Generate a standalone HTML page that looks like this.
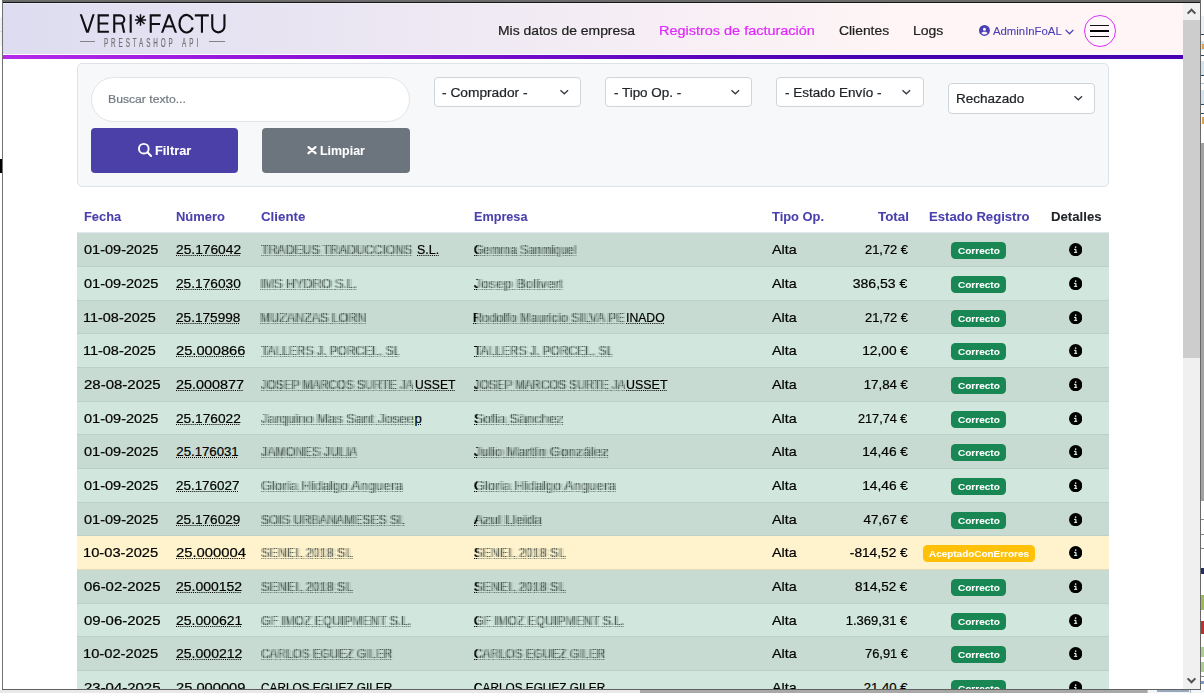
<!DOCTYPE html>
<html lang="es">
<head>
<meta charset="utf-8">
<title>VERI*FACTU - Registros de facturación</title>
<style>
*{box-sizing:border-box;margin:0;padding:0}
html,body{width:1204px;height:693px;overflow:hidden;background:#fff}
body{font-family:"Liberation Sans",sans-serif;color:#212529;position:relative;font-size:14px}
.a{position:absolute;display:block}
.t{position:absolute;white-space:pre;display:block;-webkit-text-stroke:.22px currentColor}
.u{text-decoration:underline dotted;text-decoration-thickness:1px;text-underline-offset:1px}
.bl{filter:blur(.45px);opacity:.78;color:#2c3a36 !important;text-shadow:1.5px 0 0 rgba(40,52,48,.45),-1.5px 0 0 rgba(40,52,48,.35),3px 0 0 rgba(40,52,48,.2);text-decoration:underline dashed;text-decoration-thickness:1px;text-underline-offset:1px;text-decoration-color:rgba(40,52,48,.5);-webkit-mask-image:repeating-linear-gradient(90deg,#000 0,#000 1px,rgba(0,0,0,.4) 1px,rgba(0,0,0,.4) 2px,rgba(0,0,0,.9) 2px,rgba(0,0,0,.9) 3px,rgba(0,0,0,.5) 3px,rgba(0,0,0,.5) 4.5px,#000 4.5px,#000 5px,rgba(0,0,0,.45) 5px,rgba(0,0,0,.45) 7px);mask-image:repeating-linear-gradient(90deg,#000 0,#000 1px,rgba(0,0,0,.4) 1px,rgba(0,0,0,.4) 2px,rgba(0,0,0,.9) 2px,rgba(0,0,0,.9) 3px,rgba(0,0,0,.5) 3px,rgba(0,0,0,.5) 4.5px,#000 4.5px,#000 5px,rgba(0,0,0,.45) 5px,rgba(0,0,0,.45) 7px)}
</style>
</head>
<body>
<div class="a" style="left:0px;top:0px;width:2px;height:693px;background:#ffffff;"></div>
<div class="a" style="left:0px;top:17px;width:2px;height:14px;background:#edf2f7;"></div>
<div class="a" style="left:0px;top:31px;width:2px;height:1px;background:#d4d8dc;"></div>
<div class="a" style="left:0px;top:32px;width:2px;height:14px;background:#f3f3f3;"></div>
<div class="a" style="left:0px;top:159px;width:2px;height:14px;background:#000;"></div>
<div class="a" style="left:2px;top:0px;width:1199px;height:2px;background:#6b6b6b;"></div>
<div class="a" style="left:2px;top:2px;width:1199px;height:1px;background:#151515;"></div>
<div class="a" style="left:2px;top:0px;width:1px;height:690px;background:#707070;"></div>
<div class="a" style="left:1200px;top:0px;width:1px;height:690px;background:#6a6866;"></div>
<div class="a" style="left:1201px;top:0px;width:3px;height:693px;background:#ffffff;"></div>
<div class="a" style="left:1201px;top:16px;width:3px;height:18px;background:#e8f0f8;"></div>
<div class="a" style="left:1201px;top:34px;width:3px;height:1px;background:#2a4a6a;"></div>
<div class="a" style="left:1201px;top:55px;width:3px;height:1px;background:#2a4a6a;"></div>
<div class="a" style="left:1201px;top:75px;width:3px;height:1px;background:#2a4a6a;"></div>
<div class="a" style="left:1201px;top:104px;width:3px;height:1px;background:#2a4a6a;"></div>
<div class="a" style="left:1201px;top:113px;width:3px;height:1px;background:#2a4a6a;"></div>
<div class="a" style="left:1201px;top:83px;width:3px;height:1px;background:#b8c4cc;"></div>
<div class="a" style="left:1201px;top:41px;width:3px;height:9px;background:#cfe5f2;"></div>
<div class="a" style="left:1201px;top:61px;width:3px;height:14px;background:#cfe5f2;"></div>
<div class="a" style="left:1201px;top:90px;width:3px;height:14px;background:#cfe5f2;"></div>
<div class="a" style="left:1202px;top:44px;width:2px;height:5px;background:#e0a050;"></div>
<div class="a" style="left:1202px;top:117px;width:2px;height:7px;background:#e0a050;"></div>
<div class="a" style="left:1201px;top:143px;width:3px;height:358px;background:#a2a2a2;"></div>
<div class="a" style="left:1201px;top:519px;width:3px;height:1px;background:#8a8a8a;"></div>
<div class="a" style="left:1201px;top:534px;width:3px;height:1px;background:#8a8a8a;"></div>
<div class="a" style="left:1201px;top:548px;width:3px;height:1px;background:#8a8a8a;"></div>
<div class="a" style="left:1201px;top:568px;width:3px;height:6px;background:#26306a;"></div>
<div class="a" style="left:1201px;top:595px;width:3px;height:15px;background:#9bbb59;"></div>
<div class="a" style="left:1201px;top:621px;width:3px;height:13px;background:#c0302a;"></div>
<div class="a" style="left:1201px;top:647px;width:3px;height:10px;background:#a9d18e;"></div>
<div class="a" style="left:1201px;top:662px;width:3px;height:10px;background:#a9d18e;"></div>
<div class="a" style="left:1201px;top:676px;width:3px;height:1px;background:#8a8a8a;"></div>
<div class="a" style="left:1201px;top:681px;width:3px;height:3px;background:#7a9ad0;"></div>
<div class="a" style="left:1183px;top:3px;width:17px;height:686px;background:#f0f0f0;"></div>
<div class="a" style="left:1183px;top:20px;width:17px;height:338px;background:#cdcdcd;"></div>
<svg class="a" style="left:1183px;top:3px" width="17" height="17" viewBox="0 0 17 17"><path d="M4.6 10.6 L8.5 6.7 L12.4 10.6" fill="none" stroke="#505050" stroke-width="2"/></svg>
<svg class="a" style="left:1183px;top:672px" width="17" height="17" viewBox="0 0 17 17"><path d="M4.6 6.4 L8.5 10.3 L12.4 6.4" fill="none" stroke="#505050" stroke-width="2"/></svg>
<div class="a" style="left:3px;top:3px;width:1180px;height:52px;background:linear-gradient(93deg,#dddcf0 0%,#fff5f6 76%,#fff5f6 100%);"></div>
<div class="a" style="left:3px;top:3px;width:1180px;height:1px;background:rgba(255,255,255,.4);"></div>
<div class="a" style="left:3px;top:54px;width:1180px;height:1px;background:#fdfbfd;"></div>
<div class="a" style="left:3px;top:55px;width:1180px;height:4px;background:linear-gradient(90deg,#b62bea 0%,#8c12d6 26%,#680ac4 50%,#4400ae 76%,#4a00b0 100%);"></div>
<svg class="a" style="left:76px;top:8px" width="154" height="30" viewBox="76 8 154 30">
<g fill="#101014" stroke="none">
<polygon points="79.7,14.3 81.9,14.3 87.5,30.0 92.5,14.3 94.7,14.3 88.7,32.7 86.2,32.7"/>
<polygon points="161,32.7 167.9,14.3 170.2,14.3 177,32.7 174.8,32.7 169.05,17.3 163.2,32.7"/>
<rect x="164.8" y="25.4" width="8.5" height="2"/>
</g>
<g fill="none" stroke="#101014" stroke-width="2.1">
<path d="M108.9 15.35 H98.65 V31.75 H108.9 M98.65 23.5 H108.2"/>
<path d="M114.25 32.7 V15.35 H120.2 A4.1 4.1 0 0 1 120.2 23.55 H114.25 M122.2 23.6 L124.2 32.7"/>
<path d="M130.7 14.3 V32.7"/>
<path d="M160.7 15.35 H150.75 V32.7 M150.75 24.05 H160"/>
<path d="M192.8 19.9 A7 8.75 0 1 0 192.8 27.5"/>
<path d="M194.8 15.35 H208.8 M201.95 15.35 V32.7"/>
<path d="M212.25 14.3 V26.3 A6.1 6.1 0 0 0 224.45 26.3 V14.3"/>
</g>
<g fill="none" stroke="#101014" stroke-width="1.5">
<path d="M140.5 14.2 V25.7 M134.9 19.95 H146.1 M136.5 15.9 L144.5 24 M144.5 15.9 L136.5 24"/>
</g>
<circle cx="140.5" cy="19.95" r="1.6" fill="#101014"/>
</svg>
<span class="t" style="left:103.80px;top:36px;font-size:12.6px;line-height:14px;color:#707070;transform:scaleX(0.5);transform-origin:0 50%;letter-spacing:5.806px">PRESTASHOP</span>
<span class="t" style="left:181.80px;top:36px;font-size:12.6px;line-height:14px;color:#707070;transform:scaleX(0.5);transform-origin:0 50%;letter-spacing:6.000px">API</span>
<div class="a" style="left:80px;top:41.1px;width:14.8px;height:1.4px;background:#848484;"></div>
<div class="a" style="left:209px;top:41.1px;width:16px;height:1.4px;background:#848484;"></div>
<span class="t" style="left:498.24px;transform-origin:0 50%;top:23px;font-size:13.2px;line-height:15px;color:#222;transform:scaleX(1.0556);">Mis datos de empresa</span>
<span class="t" style="left:659.10px;transform-origin:0 50%;top:23px;font-size:13.2px;line-height:15px;color:#df28fa;transform:scaleX(1.0961);">Registros de facturación</span>
<span class="t" style="left:838.70px;transform-origin:0 50%;top:23px;font-size:13.2px;line-height:15px;color:#222;transform:scaleX(1.0510);">Clientes</span>
<span class="t" style="left:912.84px;transform-origin:0 50%;top:23px;font-size:13.2px;line-height:15px;color:#222;transform:scaleX(1.0606);">Logs</span>
<svg class="a" style="left:978.8px;top:25.1px" width="10.9" height="10.9" viewBox="0 0 512 512"><path fill="#4a3fb5" d="M399 384.200C376.900 345.800 335.400 320 288 320H224c-47.400 0-88.900 25.800-111 64.200c35.200 39.200 86.200 63.800 143 63.800s107.800-24.700 143-63.800zM0 256a256 256 0 1 1 512 0A256 256 0 1 1 0 256zm256 16a72 72 0 1 0 0-144 72 72 0 1 0 0 144z"/></svg>
<span class="t" style="left:993.40px;transform-origin:0 50%;top:25px;font-size:11.2px;line-height:12px;color:#4a3fb5;transform:scaleX(1.0139);-webkit-text-stroke:.1px #4a3fb5;">AdminInFoAL</span>
<svg class="a" style="left:1064px;top:28px" width="11" height="8" viewBox="0 0 11 8"><path d="M1.6 1.9 L5.5 5.8 L9.4 1.9" fill="none" stroke="#4a3fb5" stroke-width="1.3"/></svg>
<div class="a" style="left:1084px;top:15px;width:32px;height:32px;background:#fff8fb;border:1.2px solid #dd30fa;border-radius:50%;"></div>
<div class="a" style="left:1090px;top:25px;width:19px;height:1.4px;background:#111;"></div>
<div class="a" style="left:1090px;top:30px;width:19px;height:2.2px;background:#000;"></div>
<div class="a" style="left:1090px;top:36px;width:19px;height:1.4px;background:#111;"></div>
<div class="a" style="left:77px;top:63px;width:1031.5px;height:123.5px;background:#f7f8fa;border:1px solid #dfe2e6;border-radius:5px;"></div>
<div class="a" style="left:91px;top:77px;width:318.5px;height:44.5px;background:#fff;border:1px solid #e4e4e4;border-radius:23px;"></div>
<span class="t" style="left:108.10px;transform-origin:0 50%;top:93px;font-size:11.4px;line-height:12px;color:#737a80;transform:scaleX(1.0697);">Buscar texto...</span>
<div class="a" style="left:434px;top:77px;width:147px;height:30px;background:#fff;border:1px solid #ced4da;border-radius:4px;"></div>
<span class="t" style="left:442.40px;transform-origin:0 50%;top:85px;font-size:13.2px;line-height:15px;color:#212529;transform:scaleX(1.0418);">- Comprador -</span>
<svg class="a" style="left:559.4px;top:88.6px" width="11" height="8" viewBox="0 0 11 8"><path d="M1.5 1.2 L5.3 4.8 L9.1 1.2" fill="none" stroke="#343a40" stroke-width="1.3"/></svg>
<div class="a" style="left:605px;top:77px;width:147px;height:30px;background:#fff;border:1px solid #ced4da;border-radius:4px;"></div>
<span class="t" style="left:613.60px;transform-origin:0 50%;top:85px;font-size:13.2px;line-height:15px;color:#212529;transform:scaleX(1.0182);">- Tipo Op. -</span>
<svg class="a" style="left:730.3px;top:88.6px" width="11" height="8" viewBox="0 0 11 8"><path d="M1.5 1.2 L5.3 4.8 L9.1 1.2" fill="none" stroke="#343a40" stroke-width="1.3"/></svg>
<div class="a" style="left:776px;top:77px;width:147.5px;height:30px;background:#fff;border:1px solid #ced4da;border-radius:4px;"></div>
<span class="t" style="left:785.20px;transform-origin:0 50%;top:85px;font-size:13.2px;line-height:15px;color:#212529;transform:scaleX(1.0216);">- Estado Envío -</span>
<svg class="a" style="left:901.3px;top:88.6px" width="11" height="8" viewBox="0 0 11 8"><path d="M1.5 1.2 L5.3 4.8 L9.1 1.2" fill="none" stroke="#343a40" stroke-width="1.3"/></svg>
<div class="a" style="left:948px;top:83px;width:147px;height:30.5px;background:#fff;border:1px solid #ced4da;border-radius:4px;"></div>
<span class="t" style="left:955.68px;transform-origin:0 50%;top:91px;font-size:13.2px;line-height:15px;color:#212529;transform:scaleX(1.0247);">Rechazado</span>
<svg class="a" style="left:1073.1px;top:94.7px" width="11" height="8" viewBox="0 0 11 8"><path d="M1.5 1.2 L5.3 4.8 L9.1 1.2" fill="none" stroke="#343a40" stroke-width="1.3"/></svg>
<div class="a" style="left:91px;top:128px;width:147px;height:44.7px;background:#4a40a8;border-radius:4px;"></div>
<svg class="a" style="left:136px;top:141px" width="18" height="18" viewBox="136 141 18 18"><circle cx="143.8" cy="148.7" r="4.85" fill="none" stroke="#fff" stroke-width="1.9"/><path d="M147.4 152.3 L151.1 156" stroke="#fff" stroke-width="2" stroke-linecap="round"/></svg>
<span class="t" style="left:154.70px;transform-origin:0 50%;top:143px;font-size:13.2px;line-height:15px;color:#fff;font-weight:700;-webkit-text-stroke:.06px currentColor;transform:scaleX(0.9694);">Filtrar</span>
<div class="a" style="left:262px;top:128px;width:148px;height:44.7px;background:#6c757d;border-radius:4px;"></div>
<svg class="a" style="left:305px;top:143px" width="14" height="14" viewBox="305 143 14 14"><path d="M308.5 147.2 L315.5 153.2 M315.5 147.2 L308.5 153.2" stroke="#fff" stroke-width="2.3" stroke-linecap="round"/></svg>
<span class="t" style="left:320.00px;transform-origin:0 50%;top:143px;font-size:13.2px;line-height:15px;color:#fff;font-weight:700;-webkit-text-stroke:.06px currentColor;transform:scaleX(0.9432);">Limpiar</span>
<span class="t" style="left:83.80px;transform-origin:0 50%;top:209px;font-size:12.8px;line-height:15px;color:#4a40ad;font-weight:700;-webkit-text-stroke:.06px currentColor;transform:scaleX(1.0035);">Fecha</span>
<span class="t" style="left:176.30px;transform-origin:0 50%;top:209px;font-size:12.8px;line-height:15px;color:#4a40ad;font-weight:700;-webkit-text-stroke:.06px currentColor;transform:scaleX(1.0137);">Número</span>
<span class="t" style="left:260.70px;transform-origin:0 50%;top:209px;font-size:12.8px;line-height:15px;color:#4a40ad;font-weight:700;-webkit-text-stroke:.06px currentColor;transform:scaleX(1.0388);">Cliente</span>
<span class="t" style="left:473.60px;transform-origin:0 50%;top:209px;font-size:12.8px;line-height:15px;color:#4a40ad;font-weight:700;-webkit-text-stroke:.06px currentColor;transform:scaleX(0.9883);">Empresa</span>
<span class="t" style="left:771.90px;transform-origin:0 50%;top:209px;font-size:12.8px;line-height:15px;color:#4a40ad;font-weight:700;-webkit-text-stroke:.06px currentColor;transform:scaleX(1.0078);">Tipo Op.</span>
<span class="t" style="left:877.50px;transform-origin:0 50%;top:209px;font-size:12.8px;line-height:15px;color:#4a40ad;font-weight:700;-webkit-text-stroke:.06px currentColor;transform:scaleX(1.0460);">Total</span>
<span class="t" style="left:929.00px;transform-origin:0 50%;top:209px;font-size:12.8px;line-height:15px;color:#4a40ad;font-weight:700;-webkit-text-stroke:.06px currentColor;transform:scaleX(1.0253);">Estado Registro</span>
<span class="t" style="left:1050.60px;transform-origin:0 50%;top:209px;font-size:12.8px;line-height:15px;color:#212529;font-weight:700;-webkit-text-stroke:.06px currentColor;transform:scaleX(1.0314);">Detalles</span>
<div class="a" style="left:77px;top:232px;width:1031.5px;height:1px;background:#e4e6ee;"></div>
<div class="a" style="left:77px;top:233px;width:1031.5px;height:34px;background:#c7dbd2;border-bottom:1px solid #bcd0c7;"></div>
<span class="t" style="left:83.80px;transform-origin:0 50%;top:242px;font-size:13.2px;line-height:15px;color:#000;transform:scaleX(1.1025);">01-09-2025</span>
<span class="t u" style="left:176.30px;transform-origin:0 50%;top:242px;font-size:13.2px;line-height:15px;color:#000;transform:scaleX(1.0435);">25.176042</span>
<span class="t bl" style="left:261.30px;transform-origin:0 50%;top:242px;font-size:13.2px;line-height:15px;color:#3d4945;transform:scaleX(0.9273);">TRADEUS TRADUCCIONS</span>
<span class="t u" style="left:417.00px;transform-origin:0 50%;top:242px;font-size:13.2px;line-height:15px;color:#000;transform:scaleX(0.9432);">S.L.</span>
<span class="t bl" style="left:474.30px;transform-origin:0 50%;top:242px;font-size:13.2px;line-height:15px;color:#3d4945;transform:scaleX(0.9093);">Gemma Sanmiquel</span>
<span class="t u" style="left:474.30px;transform-origin:0 50%;top:242px;font-size:13.2px;line-height:15px;color:#000;transform:scaleX(0.9093);clip-path:inset(0 calc(100% - 3.96px) 0 0);">Gemma Sanmiquel</span>
<span class="t" style="left:772.20px;transform-origin:0 50%;top:242px;font-size:13.2px;line-height:15px;color:#000;transform:scaleX(1.0817);">Alta</span>
<span class="t" style="right:296.35px;transform-origin:100% 50%;top:242px;font-size:13.2px;line-height:15px;color:#000;transform:scaleX(0.9762);">21,72 €</span>
<div class="a" style="left:951px;top:242.2px;width:55px;height:16.7px;background:#198754;border-radius:4.5px;"></div>
<span class="t" style="left:958.30px;transform-origin:0 50%;top:245px;font-size:9.6px;line-height:11px;color:#fff;font-weight:700;-webkit-text-stroke:.06px currentColor;transform:scaleX(1.0443);">Correcto</span>
<svg class="a" style="left:1069.2px;top:242.5px" width="13.3" height="13.3" viewBox="0 0 512 512"><circle cx="256" cy="256" r="256" fill="#000"/><path fill="#d1e7dd" d="M216 336h24V272H216c-13.300 0-24-10.700-24-24s10.700-24 24-24h48c13.300 0 24 10.700 24 24v88h8c13.300 0 24 10.700 24 24s-10.700 24-24 24H216c-13.300 0-24-10.700-24-24s10.700-24 24-24zm40-208a32 32 0 1 1 0 64 32 32 0 1 1 0-64z"/></svg>
<div class="a" style="left:77px;top:267px;width:1031.5px;height:34px;background:#d1e7dd;border-bottom:1px solid #bcd0c7;"></div>
<span class="t" style="left:83.80px;transform-origin:0 50%;top:276px;font-size:13.2px;line-height:15px;color:#000;transform:scaleX(1.1025);">01-09-2025</span>
<span class="t u" style="left:176.30px;transform-origin:0 50%;top:276px;font-size:13.2px;line-height:15px;color:#000;transform:scaleX(1.0386);">25.176030</span>
<span class="t bl" style="left:260.34px;transform-origin:0 50%;top:276px;font-size:13.2px;line-height:15px;color:#3d4945;transform:scaleX(0.9552);">IMS HYDRO S.L.</span>
<span class="t bl" style="left:474.30px;transform-origin:0 50%;top:276px;font-size:13.2px;line-height:15px;color:#3d4945;transform:scaleX(1.0786);">Josep Bolivert</span>
<span class="t u" style="left:474.30px;transform-origin:0 50%;top:276px;font-size:13.2px;line-height:15px;color:#000;transform:scaleX(1.0786);clip-path:inset(0 calc(100% - 3.34px) 0 0);">Josep Bolivert</span>
<span class="t" style="left:772.20px;transform-origin:0 50%;top:276px;font-size:13.2px;line-height:15px;color:#000;transform:scaleX(1.0817);">Alta</span>
<span class="t" style="right:296.40px;transform-origin:100% 50%;top:276px;font-size:13.2px;line-height:15px;color:#000;transform:scaleX(1.0635);">386,53 €</span>
<div class="a" style="left:951px;top:276.2px;width:55px;height:16.7px;background:#198754;border-radius:4.5px;"></div>
<span class="t" style="left:958.30px;transform-origin:0 50%;top:279px;font-size:9.6px;line-height:11px;color:#fff;font-weight:700;-webkit-text-stroke:.06px currentColor;transform:scaleX(1.0443);">Correcto</span>
<svg class="a" style="left:1069.2px;top:276.5px" width="13.3" height="13.3" viewBox="0 0 512 512"><circle cx="256" cy="256" r="256" fill="#000"/><path fill="#d1e7dd" d="M216 336h24V272H216c-13.300 0-24-10.700-24-24s10.700-24 24-24h48c13.300 0 24 10.700 24 24v88h8c13.300 0 24 10.700 24 24s-10.700 24-24 24H216c-13.300 0-24-10.700-24-24s10.700-24 24-24zm40-208a32 32 0 1 1 0 64 32 32 0 1 1 0-64z"/></svg>
<div class="a" style="left:77px;top:301px;width:1031.5px;height:33px;background:#c7dbd2;border-bottom:1px solid #bcd0c7;"></div>
<span class="t" style="left:82.70px;transform-origin:0 50%;top:310px;font-size:13.2px;line-height:15px;color:#000;transform:scaleX(1.0960);">11-08-2025</span>
<span class="t u" style="left:176.30px;transform-origin:0 50%;top:310px;font-size:13.2px;line-height:15px;color:#000;transform:scaleX(1.0322);">25.175998</span>
<span class="t bl" style="left:260.36px;transform-origin:0 50%;top:310px;font-size:13.2px;line-height:15px;color:#3d4945;transform:scaleX(0.9406);">MUZANZAS LORN</span>
<span class="t bl" style="left:473.34px;transform-origin:0 50%;top:310px;font-size:13.2px;line-height:15px;color:#3d4945;transform:scaleX(0.9571);">Rodolfo Mauricio SILVA PE</span>
<span class="t u" style="left:473.34px;transform-origin:0 50%;top:310px;font-size:13.2px;line-height:15px;color:#000;transform:scaleX(0.9571);clip-path:inset(0 calc(100% - 3.76px) 0 0);">Rodolfo Mauricio SILVA PE</span>
<span class="t u" style="left:626.07px;transform-origin:0 50%;top:310px;font-size:13.2px;line-height:15px;color:#000;transform:scaleX(0.9258);">INADO</span>
<span class="t" style="left:772.20px;transform-origin:0 50%;top:310px;font-size:13.2px;line-height:15px;color:#000;transform:scaleX(1.0817);">Alta</span>
<span class="t" style="right:296.35px;transform-origin:100% 50%;top:310px;font-size:13.2px;line-height:15px;color:#000;transform:scaleX(0.9762);">21,72 €</span>
<div class="a" style="left:951px;top:310.2px;width:55px;height:16.7px;background:#198754;border-radius:4.5px;"></div>
<span class="t" style="left:958.30px;transform-origin:0 50%;top:313px;font-size:9.6px;line-height:11px;color:#fff;font-weight:700;-webkit-text-stroke:.06px currentColor;transform:scaleX(1.0443);">Correcto</span>
<svg class="a" style="left:1069.2px;top:310.5px" width="13.3" height="13.3" viewBox="0 0 512 512"><circle cx="256" cy="256" r="256" fill="#000"/><path fill="#d1e7dd" d="M216 336h24V272H216c-13.300 0-24-10.700-24-24s10.700-24 24-24h48c13.300 0 24 10.700 24 24v88h8c13.300 0 24 10.700 24 24s-10.700 24-24 24H216c-13.300 0-24-10.700-24-24s10.700-24 24-24zm40-208a32 32 0 1 1 0 64 32 32 0 1 1 0-64z"/></svg>
<div class="a" style="left:77px;top:334px;width:1031.5px;height:34px;background:#d1e7dd;border-bottom:1px solid #bcd0c7;"></div>
<span class="t" style="left:82.70px;transform-origin:0 50%;top:343px;font-size:13.2px;line-height:15px;color:#000;transform:scaleX(1.0960);">11-08-2025</span>
<span class="t u" style="left:176.30px;transform-origin:0 50%;top:343px;font-size:13.2px;line-height:15px;color:#000;transform:scaleX(1.1128);">25.000866</span>
<span class="t bl" style="left:261.30px;transform-origin:0 50%;top:343px;font-size:13.2px;line-height:15px;color:#3d4945;transform:scaleX(0.9089);">TALLERS J. PORCEL, SL</span>
<span class="t bl" style="left:474.30px;transform-origin:0 50%;top:343px;font-size:13.2px;line-height:15px;color:#3d4945;transform:scaleX(0.9089);">TALLERS J. PORCEL, SL</span>
<span class="t u" style="left:474.30px;transform-origin:0 50%;top:343px;font-size:13.2px;line-height:15px;color:#000;transform:scaleX(0.9089);clip-path:inset(0 calc(100% - 3.96px) 0 0);">TALLERS J. PORCEL, SL</span>
<span class="t" style="left:772.20px;transform-origin:0 50%;top:343px;font-size:13.2px;line-height:15px;color:#000;transform:scaleX(1.0817);">Alta</span>
<span class="t" style="right:296.39px;transform-origin:100% 50%;top:343px;font-size:13.2px;line-height:15px;color:#000;transform:scaleX(1.0420);">12,00 €</span>
<div class="a" style="left:951px;top:343.2px;width:55px;height:16.7px;background:#198754;border-radius:4.5px;"></div>
<span class="t" style="left:958.30px;transform-origin:0 50%;top:346px;font-size:9.6px;line-height:11px;color:#fff;font-weight:700;-webkit-text-stroke:.06px currentColor;transform:scaleX(1.0443);">Correcto</span>
<svg class="a" style="left:1069.2px;top:343.5px" width="13.3" height="13.3" viewBox="0 0 512 512"><circle cx="256" cy="256" r="256" fill="#000"/><path fill="#d1e7dd" d="M216 336h24V272H216c-13.300 0-24-10.700-24-24s10.700-24 24-24h48c13.300 0 24 10.700 24 24v88h8c13.300 0 24 10.700 24 24s-10.700 24-24 24H216c-13.300 0-24-10.700-24-24s10.700-24 24-24zm40-208a32 32 0 1 1 0 64 32 32 0 1 1 0-64z"/></svg>
<div class="a" style="left:77px;top:368px;width:1031.5px;height:34px;background:#c7dbd2;border-bottom:1px solid #bcd0c7;"></div>
<span class="t" style="left:83.80px;transform-origin:0 50%;top:377px;font-size:13.2px;line-height:15px;color:#000;transform:scaleX(1.1367);">28-08-2025</span>
<span class="t u" style="left:176.30px;transform-origin:0 50%;top:377px;font-size:13.2px;line-height:15px;color:#000;transform:scaleX(1.0919);">25.000877</span>
<span class="t bl" style="left:261.30px;transform-origin:0 50%;top:377px;font-size:13.2px;line-height:15px;color:#3d4945;transform:scaleX(0.8870);">JOSEP MARCOS SURTE JA</span>
<span class="t u" style="left:414.58px;transform-origin:0 50%;top:377px;font-size:13.2px;line-height:15px;color:#000;transform:scaleX(0.9205);">USSET</span>
<span class="t bl" style="left:474.30px;transform-origin:0 50%;top:377px;font-size:13.2px;line-height:15px;color:#3d4945;transform:scaleX(0.8811);">JOSEP MARCOS SURTE JA</span>
<span class="t u" style="left:474.30px;transform-origin:0 50%;top:377px;font-size:13.2px;line-height:15px;color:#000;transform:scaleX(0.8811);clip-path:inset(0 calc(100% - 4.09px) 0 0);">JOSEP MARCOS SURTE JA</span>
<span class="t u" style="left:626.06px;transform-origin:0 50%;top:377px;font-size:13.2px;line-height:15px;color:#000;transform:scaleX(0.9438);">USSET</span>
<span class="t" style="left:772.20px;transform-origin:0 50%;top:377px;font-size:13.2px;line-height:15px;color:#000;transform:scaleX(1.0817);">Alta</span>
<span class="t" style="right:296.37px;transform-origin:100% 50%;top:377px;font-size:13.2px;line-height:15px;color:#000;transform:scaleX(1.0077);">17,84 €</span>
<div class="a" style="left:951px;top:377.2px;width:55px;height:16.7px;background:#198754;border-radius:4.5px;"></div>
<span class="t" style="left:958.30px;transform-origin:0 50%;top:380px;font-size:9.6px;line-height:11px;color:#fff;font-weight:700;-webkit-text-stroke:.06px currentColor;transform:scaleX(1.0443);">Correcto</span>
<svg class="a" style="left:1069.2px;top:377.5px" width="13.3" height="13.3" viewBox="0 0 512 512"><circle cx="256" cy="256" r="256" fill="#000"/><path fill="#d1e7dd" d="M216 336h24V272H216c-13.300 0-24-10.700-24-24s10.700-24 24-24h48c13.300 0 24 10.700 24 24v88h8c13.300 0 24 10.700 24 24s-10.700 24-24 24H216c-13.300 0-24-10.700-24-24s10.700-24 24-24zm40-208a32 32 0 1 1 0 64 32 32 0 1 1 0-64z"/></svg>
<div class="a" style="left:77px;top:402px;width:1031.5px;height:33px;background:#d1e7dd;border-bottom:1px solid #bcd0c7;"></div>
<span class="t" style="left:83.80px;transform-origin:0 50%;top:411px;font-size:13.2px;line-height:15px;color:#000;transform:scaleX(1.1025);">01-09-2025</span>
<span class="t u" style="left:176.30px;transform-origin:0 50%;top:411px;font-size:13.2px;line-height:15px;color:#000;transform:scaleX(1.0386);">25.176022</span>
<span class="t bl" style="left:261.30px;transform-origin:0 50%;top:411px;font-size:13.2px;line-height:15px;color:#3d4945;transform:scaleX(1.0285);">Jarquino Mas Sant Josee</span>
<span class="t u" style="left:414.50px;transform-origin:0 50%;top:411px;font-size:13.2px;line-height:15px;color:#000;">p</span>
<span class="t bl" style="left:474.30px;transform-origin:0 50%;top:411px;font-size:13.2px;line-height:15px;color:#3d4945;transform:scaleX(1.0503);">Sofia Sànchez</span>
<span class="t u" style="left:474.30px;transform-origin:0 50%;top:411px;font-size:13.2px;line-height:15px;color:#000;transform:scaleX(1.0503);clip-path:inset(0 calc(100% - 3.43px) 0 0);">Sofia Sànchez</span>
<span class="t" style="left:772.20px;transform-origin:0 50%;top:411px;font-size:13.2px;line-height:15px;color:#000;transform:scaleX(1.0817);">Alta</span>
<span class="t" style="right:296.33px;transform-origin:100% 50%;top:411px;font-size:13.2px;line-height:15px;color:#000;transform:scaleX(0.9616);">217,74 €</span>
<div class="a" style="left:951px;top:411.2px;width:55px;height:16.7px;background:#198754;border-radius:4.5px;"></div>
<span class="t" style="left:958.30px;transform-origin:0 50%;top:414px;font-size:9.6px;line-height:11px;color:#fff;font-weight:700;-webkit-text-stroke:.06px currentColor;transform:scaleX(1.0443);">Correcto</span>
<svg class="a" style="left:1069.2px;top:411.5px" width="13.3" height="13.3" viewBox="0 0 512 512"><circle cx="256" cy="256" r="256" fill="#000"/><path fill="#d1e7dd" d="M216 336h24V272H216c-13.300 0-24-10.700-24-24s10.700-24 24-24h48c13.300 0 24 10.700 24 24v88h8c13.300 0 24 10.700 24 24s-10.700 24-24 24H216c-13.300 0-24-10.700-24-24s10.700-24 24-24zm40-208a32 32 0 1 1 0 64 32 32 0 1 1 0-64z"/></svg>
<div class="a" style="left:77px;top:435px;width:1031.5px;height:34px;background:#c7dbd2;border-bottom:1px solid #bcd0c7;"></div>
<span class="t" style="left:83.80px;transform-origin:0 50%;top:444px;font-size:13.2px;line-height:15px;color:#000;transform:scaleX(1.1025);">01-09-2025</span>
<span class="t u" style="left:176.30px;transform-origin:0 50%;top:444px;font-size:13.2px;line-height:15px;color:#000;">25.176031</span>
<span class="t bl" style="left:261.30px;transform-origin:0 50%;top:444px;font-size:13.2px;line-height:15px;color:#3d4945;transform:scaleX(0.9341);">JAMONES JULIA</span>
<span class="t bl" style="left:474.30px;transform-origin:0 50%;top:444px;font-size:13.2px;line-height:15px;color:#3d4945;transform:scaleX(1.0532);">Julio Martín González</span>
<span class="t u" style="left:474.30px;transform-origin:0 50%;top:444px;font-size:13.2px;line-height:15px;color:#000;transform:scaleX(1.0532);clip-path:inset(0 calc(100% - 3.42px) 0 0);">Julio Martín González</span>
<span class="t" style="left:772.20px;transform-origin:0 50%;top:444px;font-size:13.2px;line-height:15px;color:#000;transform:scaleX(1.0817);">Alta</span>
<span class="t" style="right:296.39px;transform-origin:100% 50%;top:444px;font-size:13.2px;line-height:15px;color:#000;transform:scaleX(1.0420);">14,46 €</span>
<div class="a" style="left:951px;top:444.2px;width:55px;height:16.7px;background:#198754;border-radius:4.5px;"></div>
<span class="t" style="left:958.30px;transform-origin:0 50%;top:447px;font-size:9.6px;line-height:11px;color:#fff;font-weight:700;-webkit-text-stroke:.06px currentColor;transform:scaleX(1.0443);">Correcto</span>
<svg class="a" style="left:1069.2px;top:444.5px" width="13.3" height="13.3" viewBox="0 0 512 512"><circle cx="256" cy="256" r="256" fill="#000"/><path fill="#d1e7dd" d="M216 336h24V272H216c-13.300 0-24-10.700-24-24s10.700-24 24-24h48c13.300 0 24 10.700 24 24v88h8c13.300 0 24 10.700 24 24s-10.700 24-24 24H216c-13.300 0-24-10.700-24-24s10.700-24 24-24zm40-208a32 32 0 1 1 0 64 32 32 0 1 1 0-64z"/></svg>
<div class="a" style="left:77px;top:469px;width:1031.5px;height:34px;background:#d1e7dd;border-bottom:1px solid #bcd0c7;"></div>
<span class="t" style="left:83.80px;transform-origin:0 50%;top:478px;font-size:13.2px;line-height:15px;color:#000;transform:scaleX(1.1025);">01-09-2025</span>
<span class="t u" style="left:176.30px;transform-origin:0 50%;top:478px;font-size:13.2px;line-height:15px;color:#000;transform:scaleX(1.0161);">25.176027</span>
<span class="t bl" style="left:261.30px;transform-origin:0 50%;top:478px;font-size:13.2px;line-height:15px;color:#3d4945;transform:scaleX(1.0432);">Gloria Hidalgo Anguera</span>
<span class="t bl" style="left:474.30px;transform-origin:0 50%;top:478px;font-size:13.2px;line-height:15px;color:#3d4945;transform:scaleX(1.0432);">Gloria Hidalgo Anguera</span>
<span class="t u" style="left:474.30px;transform-origin:0 50%;top:478px;font-size:13.2px;line-height:15px;color:#000;transform:scaleX(1.0432);clip-path:inset(0 calc(100% - 3.45px) 0 0);">Gloria Hidalgo Anguera</span>
<span class="t" style="left:772.20px;transform-origin:0 50%;top:478px;font-size:13.2px;line-height:15px;color:#000;transform:scaleX(1.0817);">Alta</span>
<span class="t" style="right:296.39px;transform-origin:100% 50%;top:478px;font-size:13.2px;line-height:15px;color:#000;transform:scaleX(1.0420);">14,46 €</span>
<div class="a" style="left:951px;top:478.2px;width:55px;height:16.7px;background:#198754;border-radius:4.5px;"></div>
<span class="t" style="left:958.30px;transform-origin:0 50%;top:481px;font-size:9.6px;line-height:11px;color:#fff;font-weight:700;-webkit-text-stroke:.06px currentColor;transform:scaleX(1.0443);">Correcto</span>
<svg class="a" style="left:1069.2px;top:478.5px" width="13.3" height="13.3" viewBox="0 0 512 512"><circle cx="256" cy="256" r="256" fill="#000"/><path fill="#d1e7dd" d="M216 336h24V272H216c-13.300 0-24-10.700-24-24s10.700-24 24-24h48c13.300 0 24 10.700 24 24v88h8c13.300 0 24 10.700 24 24s-10.700 24-24 24H216c-13.300 0-24-10.700-24-24s10.700-24 24-24zm40-208a32 32 0 1 1 0 64 32 32 0 1 1 0-64z"/></svg>
<div class="a" style="left:77px;top:503px;width:1031.5px;height:33px;background:#c7dbd2;border-bottom:1px solid #bcd0c7;"></div>
<span class="t" style="left:83.80px;transform-origin:0 50%;top:512px;font-size:13.2px;line-height:15px;color:#000;transform:scaleX(1.1025);">01-09-2025</span>
<span class="t u" style="left:176.30px;transform-origin:0 50%;top:512px;font-size:13.2px;line-height:15px;color:#000;transform:scaleX(1.0322);">25.176029</span>
<span class="t bl" style="left:261.30px;transform-origin:0 50%;top:512px;font-size:13.2px;line-height:15px;color:#3d4945;transform:scaleX(0.9225);">SOIS URBANAMESES SL</span>
<span class="t bl" style="left:474.30px;transform-origin:0 50%;top:512px;font-size:13.2px;line-height:15px;color:#3d4945;transform:scaleX(1.0540);">Azul Lleida</span>
<span class="t u" style="left:474.30px;transform-origin:0 50%;top:512px;font-size:13.2px;line-height:15px;color:#000;transform:scaleX(1.0540);clip-path:inset(0 calc(100% - 3.42px) 0 0);">Azul Lleida</span>
<span class="t" style="left:772.20px;transform-origin:0 50%;top:512px;font-size:13.2px;line-height:15px;color:#000;transform:scaleX(1.0817);">Alta</span>
<span class="t" style="right:296.37px;transform-origin:100% 50%;top:512px;font-size:13.2px;line-height:15px;color:#000;transform:scaleX(1.0120);">47,67 €</span>
<div class="a" style="left:951px;top:512.2px;width:55px;height:16.7px;background:#198754;border-radius:4.5px;"></div>
<span class="t" style="left:958.30px;transform-origin:0 50%;top:515px;font-size:9.6px;line-height:11px;color:#fff;font-weight:700;-webkit-text-stroke:.06px currentColor;transform:scaleX(1.0443);">Correcto</span>
<svg class="a" style="left:1069.2px;top:512.5px" width="13.3" height="13.3" viewBox="0 0 512 512"><circle cx="256" cy="256" r="256" fill="#000"/><path fill="#d1e7dd" d="M216 336h24V272H216c-13.300 0-24-10.700-24-24s10.700-24 24-24h48c13.300 0 24 10.700 24 24v88h8c13.300 0 24 10.700 24 24s-10.700 24-24 24H216c-13.300 0-24-10.700-24-24s10.700-24 24-24zm40-208a32 32 0 1 1 0 64 32 32 0 1 1 0-64z"/></svg>
<div class="a" style="left:77px;top:536px;width:1031.5px;height:34px;background:#fff3cd;border-bottom:1px solid #e6dbb9;"></div>
<span class="t" style="left:82.69px;transform-origin:0 50%;top:545px;font-size:13.2px;line-height:15px;color:#000;transform:scaleX(1.1146);">10-03-2025</span>
<span class="t u" style="left:176.30px;transform-origin:0 50%;top:545px;font-size:13.2px;line-height:15px;color:#000;transform:scaleX(1.1241);">25.000004</span>
<span class="t bl" style="left:261.30px;transform-origin:0 50%;top:545px;font-size:13.2px;line-height:15px;color:#3d4945;transform:scaleX(0.9581);">SENEL 2018 SL</span>
<span class="t bl" style="left:474.30px;transform-origin:0 50%;top:545px;font-size:13.2px;line-height:15px;color:#3d4945;transform:scaleX(0.9581);">SENEL 2018 SL</span>
<span class="t u" style="left:474.30px;transform-origin:0 50%;top:545px;font-size:13.2px;line-height:15px;color:#000;transform:scaleX(0.9581);clip-path:inset(0 calc(100% - 3.76px) 0 0);">SENEL 2018 SL</span>
<span class="t" style="left:772.20px;transform-origin:0 50%;top:545px;font-size:13.2px;line-height:15px;color:#000;transform:scaleX(1.0817);">Alta</span>
<span class="t" style="right:296.38px;transform-origin:100% 50%;top:545px;font-size:13.2px;line-height:15px;color:#000;transform:scaleX(1.0392);">-814,52 €</span>
<div class="a" style="left:923px;top:545.2px;width:112px;height:16.7px;background:#ffc107;border-radius:4.5px;"></div>
<span class="t" style="left:929.40px;transform-origin:0 50%;top:548px;font-size:9.6px;line-height:11px;color:#fff;font-weight:700;-webkit-text-stroke:.06px currentColor;transform:scaleX(1.0358);">AceptadoConErrores</span>
<svg class="a" style="left:1069.2px;top:545.5px" width="13.3" height="13.3" viewBox="0 0 512 512"><circle cx="256" cy="256" r="256" fill="#000"/><path fill="#d1e7dd" d="M216 336h24V272H216c-13.300 0-24-10.700-24-24s10.700-24 24-24h48c13.300 0 24 10.700 24 24v88h8c13.300 0 24 10.700 24 24s-10.700 24-24 24H216c-13.300 0-24-10.700-24-24s10.700-24 24-24zm40-208a32 32 0 1 1 0 64 32 32 0 1 1 0-64z"/></svg>
<div class="a" style="left:77px;top:570px;width:1031.5px;height:34px;background:#c7dbd2;border-bottom:1px solid #bcd0c7;"></div>
<span class="t" style="left:83.80px;transform-origin:0 50%;top:579px;font-size:13.2px;line-height:15px;color:#000;transform:scaleX(1.1337);">06-02-2025</span>
<span class="t u" style="left:176.30px;transform-origin:0 50%;top:579px;font-size:13.2px;line-height:15px;color:#000;transform:scaleX(1.0596);">25.000152</span>
<span class="t bl" style="left:261.30px;transform-origin:0 50%;top:579px;font-size:13.2px;line-height:15px;color:#3d4945;transform:scaleX(0.9581);">SENEL 2018 SL</span>
<span class="t bl" style="left:474.30px;transform-origin:0 50%;top:579px;font-size:13.2px;line-height:15px;color:#3d4945;transform:scaleX(0.9581);">SENEL 2018 SL</span>
<span class="t u" style="left:474.30px;transform-origin:0 50%;top:579px;font-size:13.2px;line-height:15px;color:#000;transform:scaleX(0.9581);clip-path:inset(0 calc(100% - 3.76px) 0 0);">SENEL 2018 SL</span>
<span class="t" style="left:772.20px;transform-origin:0 50%;top:579px;font-size:13.2px;line-height:15px;color:#000;transform:scaleX(1.0817);">Alta</span>
<span class="t" style="right:296.37px;transform-origin:100% 50%;top:579px;font-size:13.2px;line-height:15px;color:#000;transform:scaleX(1.0192);">814,52 €</span>
<div class="a" style="left:951px;top:579.2px;width:55px;height:16.7px;background:#198754;border-radius:4.5px;"></div>
<span class="t" style="left:958.30px;transform-origin:0 50%;top:582px;font-size:9.6px;line-height:11px;color:#fff;font-weight:700;-webkit-text-stroke:.06px currentColor;transform:scaleX(1.0443);">Correcto</span>
<svg class="a" style="left:1069.2px;top:579.5px" width="13.3" height="13.3" viewBox="0 0 512 512"><circle cx="256" cy="256" r="256" fill="#000"/><path fill="#d1e7dd" d="M216 336h24V272H216c-13.300 0-24-10.700-24-24s10.700-24 24-24h48c13.300 0 24 10.700 24 24v88h8c13.300 0 24 10.700 24 24s-10.700 24-24 24H216c-13.300 0-24-10.700-24-24s10.700-24 24-24zm40-208a32 32 0 1 1 0 64 32 32 0 1 1 0-64z"/></svg>
<div class="a" style="left:77px;top:604px;width:1031.5px;height:33px;background:#d1e7dd;border-bottom:1px solid #bcd0c7;"></div>
<span class="t" style="left:83.80px;transform-origin:0 50%;top:613px;font-size:13.2px;line-height:15px;color:#000;transform:scaleX(1.1337);">09-06-2025</span>
<span class="t u" style="left:176.30px;transform-origin:0 50%;top:613px;font-size:13.2px;line-height:15px;color:#000;transform:scaleX(1.0645);">25.000621</span>
<span class="t bl" style="left:261.30px;transform-origin:0 50%;top:613px;font-size:13.2px;line-height:15px;color:#3d4945;transform:scaleX(0.9158);">GF IMOZ EQUIPMENT S.L.</span>
<span class="t bl" style="left:474.30px;transform-origin:0 50%;top:613px;font-size:13.2px;line-height:15px;color:#3d4945;transform:scaleX(0.9158);">GF IMOZ EQUIPMENT S.L.</span>
<span class="t u" style="left:474.30px;transform-origin:0 50%;top:613px;font-size:13.2px;line-height:15px;color:#000;transform:scaleX(0.9158);clip-path:inset(0 calc(100% - 3.93px) 0 0);">GF IMOZ EQUIPMENT S.L.</span>
<span class="t" style="left:772.20px;transform-origin:0 50%;top:613px;font-size:13.2px;line-height:15px;color:#000;transform:scaleX(1.0817);">Alta</span>
<span class="t" style="right:296.35px;transform-origin:100% 50%;top:613px;font-size:13.2px;line-height:15px;color:#000;transform:scaleX(0.9888);">1.369,31 €</span>
<div class="a" style="left:951px;top:613.2px;width:55px;height:16.7px;background:#198754;border-radius:4.5px;"></div>
<span class="t" style="left:958.30px;transform-origin:0 50%;top:616px;font-size:9.6px;line-height:11px;color:#fff;font-weight:700;-webkit-text-stroke:.06px currentColor;transform:scaleX(1.0443);">Correcto</span>
<svg class="a" style="left:1069.2px;top:613.5px" width="13.3" height="13.3" viewBox="0 0 512 512"><circle cx="256" cy="256" r="256" fill="#000"/><path fill="#d1e7dd" d="M216 336h24V272H216c-13.300 0-24-10.700-24-24s10.700-24 24-24h48c13.300 0 24 10.700 24 24v88h8c13.300 0 24 10.700 24 24s-10.700 24-24 24H216c-13.300 0-24-10.700-24-24s10.700-24 24-24zm40-208a32 32 0 1 1 0 64 32 32 0 1 1 0-64z"/></svg>
<div class="a" style="left:77px;top:637px;width:1031.5px;height:34px;background:#c7dbd2;border-bottom:1px solid #bcd0c7;"></div>
<span class="t" style="left:82.69px;transform-origin:0 50%;top:646px;font-size:13.2px;line-height:15px;color:#000;transform:scaleX(1.1146);">10-02-2025</span>
<span class="t u" style="left:176.30px;transform-origin:0 50%;top:646px;font-size:13.2px;line-height:15px;color:#000;transform:scaleX(1.0645);">25.000212</span>
<span class="t bl" style="left:261.30px;transform-origin:0 50%;top:646px;font-size:13.2px;line-height:15px;color:#3d4945;transform:scaleX(0.8950);">CARLOS EGUEZ GILER</span>
<span class="t bl" style="left:474.30px;transform-origin:0 50%;top:646px;font-size:13.2px;line-height:15px;color:#3d4945;transform:scaleX(0.8950);">CARLOS EGUEZ GILER</span>
<span class="t u" style="left:474.30px;transform-origin:0 50%;top:646px;font-size:13.2px;line-height:15px;color:#000;transform:scaleX(0.8950);clip-path:inset(0 calc(100% - 4.02px) 0 0);">CARLOS EGUEZ GILER</span>
<span class="t" style="left:772.20px;transform-origin:0 50%;top:646px;font-size:13.2px;line-height:15px;color:#000;transform:scaleX(1.0817);">Alta</span>
<span class="t" style="right:296.35px;transform-origin:100% 50%;top:646px;font-size:13.2px;line-height:15px;color:#000;transform:scaleX(0.9762);">76,91 €</span>
<div class="a" style="left:951px;top:646.2px;width:55px;height:16.7px;background:#198754;border-radius:4.5px;"></div>
<span class="t" style="left:958.30px;transform-origin:0 50%;top:649px;font-size:9.6px;line-height:11px;color:#fff;font-weight:700;-webkit-text-stroke:.06px currentColor;transform:scaleX(1.0443);">Correcto</span>
<svg class="a" style="left:1069.2px;top:646.5px" width="13.3" height="13.3" viewBox="0 0 512 512"><circle cx="256" cy="256" r="256" fill="#000"/><path fill="#d1e7dd" d="M216 336h24V272H216c-13.300 0-24-10.700-24-24s10.700-24 24-24h48c13.300 0 24 10.700 24 24v88h8c13.300 0 24 10.700 24 24s-10.700 24-24 24H216c-13.300 0-24-10.700-24-24s10.700-24 24-24zm40-208a32 32 0 1 1 0 64 32 32 0 1 1 0-64z"/></svg>
<div class="a" style="left:77px;top:671px;width:1031.5px;height:34px;background:#d1e7dd;border-bottom:1px solid #bcd0c7;"></div>
<span class="t" style="left:83.80px;transform-origin:0 50%;top:680px;font-size:13.2px;line-height:15px;color:#000;transform:scaleX(1.1337);">23-04-2025</span>
<span class="t u" style="left:176.30px;transform-origin:0 50%;top:680px;font-size:13.2px;line-height:15px;color:#000;transform:scaleX(1.1128);">25.000009</span>
<span class="t u" style="left:261.30px;transform-origin:0 50%;top:680px;font-size:13.2px;line-height:15px;color:#000;transform:scaleX(0.8950);">CARLOS EGUEZ GILER</span>
<span class="t u" style="left:474.30px;transform-origin:0 50%;top:680px;font-size:13.2px;line-height:15px;color:#000;transform:scaleX(0.8950);">CARLOS EGUEZ GILER</span>
<span class="t u" style="left:474.30px;transform-origin:0 50%;top:680px;font-size:13.2px;line-height:15px;color:#000;transform:scaleX(0.8950);clip-path:inset(0 calc(100% - 4.02px) 0 0);">CARLOS EGUEZ GILER</span>
<span class="t" style="left:772.20px;transform-origin:0 50%;top:680px;font-size:13.2px;line-height:15px;color:#000;transform:scaleX(1.0817);">Alta</span>
<span class="t" style="right:296.36px;transform-origin:100% 50%;top:680px;font-size:13.2px;line-height:15px;color:#000;">21,40 €</span>
<div class="a" style="left:951px;top:680.2px;width:55px;height:16.7px;background:#198754;border-radius:4.5px;"></div>
<span class="t" style="left:958.30px;transform-origin:0 50%;top:683px;font-size:9.6px;line-height:11px;color:#fff;font-weight:700;-webkit-text-stroke:.06px currentColor;transform:scaleX(1.0443);">Correcto</span>
<svg class="a" style="left:1069.2px;top:680.5px" width="13.3" height="13.3" viewBox="0 0 512 512"><circle cx="256" cy="256" r="256" fill="#000"/><path fill="#d1e7dd" d="M216 336h24V272H216c-13.300 0-24-10.700-24-24s10.700-24 24-24h48c13.300 0 24 10.700 24 24v88h8c13.300 0 24 10.700 24 24s-10.700 24-24 24H216c-13.300 0-24-10.700-24-24s10.700-24 24-24zm40-208a32 32 0 1 1 0 64 32 32 0 1 1 0-64z"/></svg>
<div class="a" style="left:0px;top:690px;width:1204px;height:3px;background:#e9e9e9;"></div>
<div class="a" style="left:640px;top:690px;width:508px;height:3px;background:#a8a8a8;"></div>
<div class="a" style="left:1148px;top:690px;width:56px;height:3px;background:#f2f5f8;"></div>
<div class="a" style="left:1157px;top:690px;width:32px;height:2px;background:#9aa8bc;"></div>
<div class="a" style="left:1147px;top:690px;width:1px;height:3px;background:#c8c8c8;"></div>
<div class="a" style="left:1190px;top:690px;width:1px;height:3px;background:#b0b0b0;"></div>
<div class="a" style="left:2px;top:689px;width:1199px;height:1px;background:#606060;"></div>
</body>
</html>
